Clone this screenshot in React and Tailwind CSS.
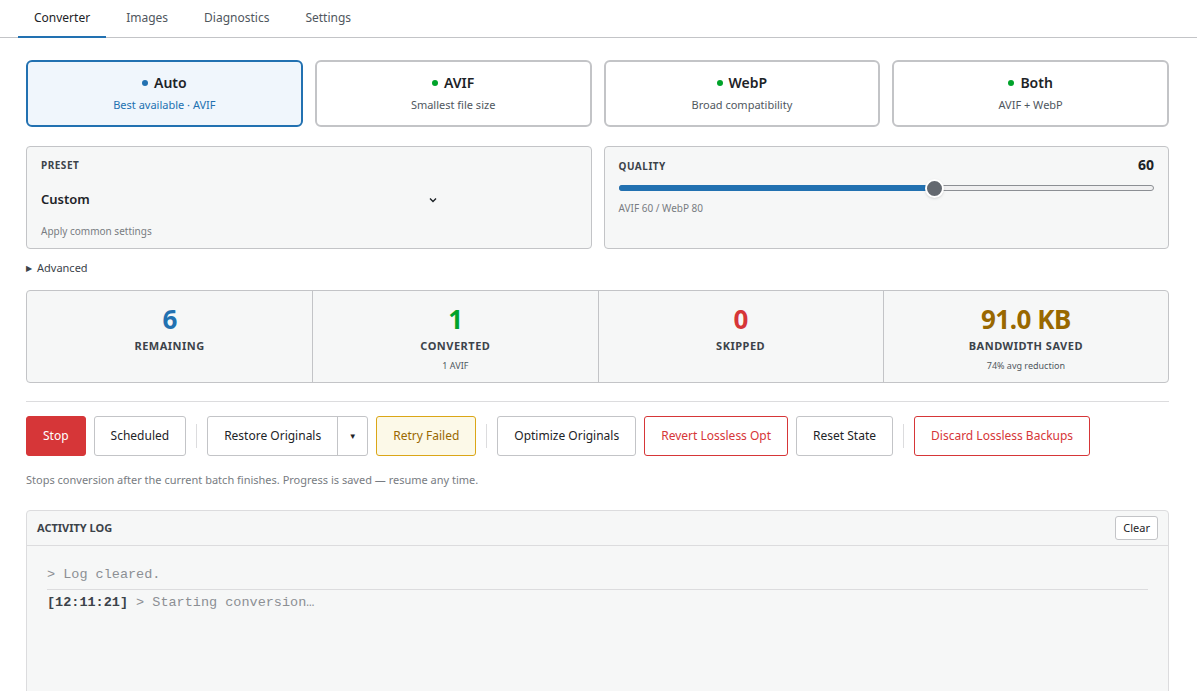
import { useState } from 'react';

const font = { fontFamily: '"Noto Sans", "Open Sans", Arial, sans-serif' };

const formats = [
  { key: 'auto', title: 'Auto', sub: 'Best available · AVIF', dot: 'bg-[#2271b1]' },
  { key: 'avif', title: 'AVIF', sub: 'Smallest file size', dot: 'bg-[#00a32a]' },
  { key: 'webp', title: 'WebP', sub: 'Broad compatibility', dot: 'bg-[#00a32a]' },
  { key: 'both', title: 'Both', sub: 'AVIF + WebP', dot: 'bg-[#00a32a]' },
];

const stats = [
  { value: '6', label: 'Remaining', color: 'text-[#2271b1]' },
  { value: '1', label: 'Converted', color: 'text-[#00a32a]', sub: '1 AVIF' },
  { value: '0', label: 'Skipped', color: 'text-[#d63638]' },
  { value: '91.0 KB', label: 'Bandwidth Saved', color: 'text-[#996800]', sub: '74% avg reduction' },
];

const Sep = () => <div className="w-px h-6 bg-[#dcdcde] mx-[2px]" />;

const Btn = ({ children, className = '' }) => (
  <button className={`h-10 px-4 rounded-[3px] border text-[12px] ${className}`}>{children}</button>
);

export default function App() {
  const [tab, setTab] = useState('Converter');
  const [format, setFormat] = useState('auto');

  return (
    <div className="min-h-[691px] bg-white text-[#1d2327]" style={font}>
      <div className="flex gap-1 border-b border-[#c3c4c7] px-[18px]">
        {['Converter', 'Images', 'Diagnostics', 'Settings'].map((t) => (
          <button
            key={t}
            onClick={() => setTab(t)}
            className={`px-4 h-[38px] text-[12px] border-b-2 -mb-px ${
              tab === t ? 'border-[#2271b1] text-[#1d2327]' : 'border-transparent text-[#50575e]'
            }`}
          >
            {t}
          </button>
        ))}
      </div>

      <div className="px-[26px] pt-[22px] pr-[28px]">
        <div className="grid grid-cols-4 gap-3">
          {formats.map((f) => (
            <button
              key={f.key}
              onClick={() => setFormat(f.key)}
              className={`h-[67px] rounded-md border-2 flex flex-col items-center justify-center ${
                format === f.key ? 'border-[#2271b1] bg-[#f0f6fc]' : 'border-[#c3c4c7] bg-white'
              }`}
            >
              <div className="flex items-center gap-[6px] text-[14px] font-semibold leading-5">
                <span className={`w-[6px] h-[6px] rounded-full ${f.dot}`} />
                {f.title}
              </div>
              <div className={`text-[11px] mt-[4px] ${format === f.key ? 'text-[#2271b1]' : 'text-[#50575e]'}`}>
                {f.sub}
              </div>
            </button>
          ))}
        </div>

        <div className="grid grid-cols-2 gap-3 mt-[19px]">
          <div className="h-[103px] bg-[#f6f7f7] border border-[#c3c4c7] rounded px-[14px] pt-[11px]">
            <div className="text-[10px] font-bold tracking-[0.5px] text-[#3c434a]">PRESET</div>
            <div className="flex items-center mt-[17px] w-[397px] justify-between">
              <span className="text-[13px] font-semibold">Custom</span>
              <svg width="10" height="10" viewBox="0 0 10 10">
                <path d="M2 3.5 L5 6.5 L8 3.5" fill="none" stroke="#1d2327" strokeWidth="1.4" />
              </svg>
            </div>
            <div className="text-[10px] text-[#787c82] mt-[14px]">Apply common settings</div>
          </div>
          <div className="h-[103px] bg-[#f6f7f7] border border-[#c3c4c7] rounded px-[14px] pt-[7px]">
            <div className="flex justify-between items-center">
              <span className="text-[10px] font-bold tracking-[0.5px] text-[#3c434a] mt-[4px]">QUALITY</span>
              <span className="text-[14px] font-bold">60</span>
            </div>
            <div className="relative h-[18px] mt-[4px] flex items-center">
              <div className="w-full h-[6px] rounded-full bg-[#f0f0f1] border border-[#8c8f94]" />
              <div className="absolute left-0 h-[6px] rounded-full bg-[#2271b1]" style={{ width: '59%' }} />
              <div
                className="absolute w-[19px] h-[19px] rounded-full bg-[#646970] border-2 border-white shadow"
                style={{ left: 'calc(59% - 9px)' }}
              />
            </div>
            <div className="text-[10px] text-[#787c82] mt-[4px]">AVIF 60 / WebP 80</div>
          </div>
        </div>

        <div className="flex items-center gap-[5px] mt-[11px] text-[11px] text-[#3c434a]">
          <span className="text-[8px]">▶</span>Advanced
        </div>

        <div className="grid grid-cols-4 mt-[13px] h-[93px] bg-[#f6f7f7] border border-[#c3c4c7] rounded">
          {stats.map((s, i) => (
            <div
              key={s.label}
              className={`flex flex-col items-center pt-[9px] ${i > 0 ? 'border-l border-[#c3c4c7]' : ''}`}
            >
              <div className={`text-[26px] font-bold leading-[38px] tracking-[-0.5px] ${s.color}`}>{s.value}</div>
              <div className="text-[11px] font-bold uppercase tracking-[0.5px] text-[#3c434a] leading-4">
                {s.label}
              </div>
              {s.sub && <div className="text-[9px] text-[#50575e] mt-[5px]">{s.sub}</div>}
            </div>
          ))}
        </div>

        <div className="border-t border-[#dcdcde] mt-[18px]" />

        <div className="flex items-center gap-2 mt-[14px]">
          <Btn className="bg-[#d63638] border-[#d63638] text-white">Stop</Btn>
          <Btn className="bg-white border-[#c3c4c7]">Scheduled</Btn>
          <Sep />
          <div className="flex h-10 border border-[#c3c4c7] rounded-[3px] bg-white text-[12px]">
            <span className="px-4 flex items-center">Restore Originals</span>
            <span className="w-[30px] border-l border-[#c3c4c7] flex items-center justify-center text-[8px]">▼</span>
          </div>
          <Btn className="bg-[#fcf9e8] border-[#dba617] text-[#996800]">Retry Failed</Btn>
          <Sep />
          <Btn className="bg-white border-[#c3c4c7]">Optimize Originals</Btn>
          <Btn className="bg-white border-[#d63638] text-[#d63638]">Revert Lossless Opt</Btn>
          <Btn className="bg-white border-[#c3c4c7]">Reset State</Btn>
          <Sep />
          <Btn className="bg-white border-[#d63638] text-[#d63638]">Discard Lossless Backups</Btn>
        </div>

        <div className="text-[11px] text-[#787c82] mt-[16px]">
          Stops conversion after the current batch finishes. Progress is saved — resume any time.
        </div>

        <div className="mt-[22px] border border-[#dcdcde] rounded-t bg-[#f6f7f7] min-h-[200px]">
          <div className="h-[35px] flex items-center justify-between px-[10px] border-b border-[#dcdcde]">
            <span className="text-[11px] font-bold text-[#3c434a]">ACTIVITY LOG</span>
            <button className="h-6 px-[7px] text-[11px] bg-white border border-[#c3c4c7] rounded-[3px]">Clear</button>
          </div>
          <div className="px-5 pt-[20px] text-[13.5px]" style={{ fontFamily: '"Liberation Mono", monospace' }}>
            <div className="pb-[5px] border-b border-[#dcdcde] text-[#8c8f94] leading-[18px]">&gt; Log cleared.</div>
            <div className="pt-[4px] text-[#8c8f94] leading-[18px]">
              <span className="font-bold text-[#3c434a]">[12:11:21]</span> &gt; Starting conversion…
            </div>
          </div>
        </div>
      </div>
    </div>
  );
}
